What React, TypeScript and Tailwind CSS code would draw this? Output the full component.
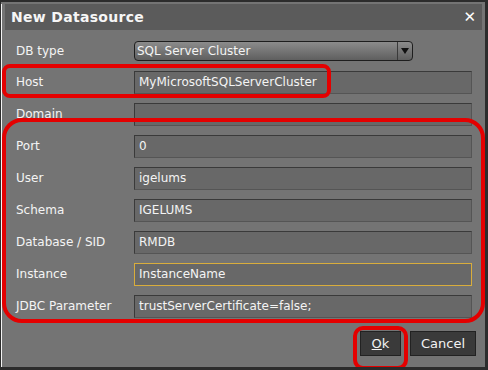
import React from 'react';

const rows: { label: string; value: string; focus?: boolean }[] = [
  { label: 'Host', value: 'MyMicrosoftSQLServerCluster' },
  { label: 'Domain', value: '' },
  { label: 'Port', value: '0' },
  { label: 'User', value: 'igelums' },
  { label: 'Schema', value: 'IGELUMS' },
  { label: 'Database / SID', value: 'RMDB' },
  { label: 'Instance', value: 'InstanceName', focus: true },
  { label: 'JDBC Parameter', value: 'trustServerCertificate=false;' },
];

export default function App() {
  return (
    <div
      className="relative w-[488px] h-[370px] overflow-hidden bg-[#747474] border-t-2 border-l border-r-[3px] border-b-[3px] border-[#2c2c2c] text-[#f4f4f4] text-[12px]"
      style={{ fontFamily: '"DejaVu Sans", Verdana, sans-serif' }}
    >
      <div className="h-full border-l border-[#f4f4f4]">
        {/* Title bar */}
        <div className="mx-[3px] mt-[2px] h-[26px] bg-[#5b5b5b] flex items-center justify-between pl-[6px] pr-[6px]">
          <span className="text-[14px] font-bold text-[#f6f6f6] tracking-[0.3px]">New Datasource</span>
          <span className="text-[15px] font-bold text-white leading-none">✕</span>
        </div>

        <div className="pt-[6px]">
          {/* DB type */}
          <div className="h-[30px] flex items-center pl-[14px]">
            <span className="w-[118px]">DB type</span>
            <div className="w-[279px] h-[20px] rounded-[4px] border border-[#1e1e1e] bg-gradient-to-b from-[#8c8c8c] to-[#5f5f5f] flex items-center">
              <span className="flex-1 pl-[2px] text-[#f4f4f4]">SQL Server Cluster</span>
              <div className="w-[15px] h-full border-l border-[#3a3a3a] flex items-center justify-center">
                <svg width="8" height="6" viewBox="0 0 8 6">
                  <path d="M0 0h8L4 6z" fill="#111" />
                </svg>
              </div>
            </div>
          </div>

          {rows.map((r) => (
            <div key={r.label} className="h-[32px] flex items-center pl-[14px]">
              <span className="w-[118px]">{r.label}</span>
              <div
                className={
                  r.focus
                    ? 'w-[338px] h-[23px] bg-[#686868] border border-[#d9ad3c] flex items-center pl-[4px]'
                    : 'w-[338px] h-[23px] bg-[#686868] border border-[#3a3a3a] border-b-[#555] border-r-[#555] flex items-center pl-[4px]'
                }
              >
                {r.value}
              </div>
            </div>
          ))}

          {/* Buttons */}
          <div className="flex justify-end gap-[9px] pr-[9px] mt-[9px]">
            <button className="w-[41px] h-[25px] bg-[#3a3a3a] border border-[#222] text-[13px] text-[#f2f2f2]">
              <span className="underline">O</span>k
            </button>
            <button className="w-[66px] h-[25px] bg-[#3a3a3a] border border-[#222] text-[13px] text-[#f2f2f2]">
              Cancel
            </button>
          </div>
        </div>
      </div>

      {/* Red annotation boxes */}
      <div className="absolute left-[1px] top-[62px] w-[329px] h-[34px] border-[4px] border-[#e40000] rounded-[8px]" />
      <div className="absolute left-[1px] top-[116px] w-[483px] h-[205px] border-[4px] border-[#e40000] rounded-[20px]" />
      <div className="absolute left-[352px] top-[324px] w-[55px] h-[44px] border-[4px] border-[#e40000] rounded-[10px]" />
    </div>
  );
}
